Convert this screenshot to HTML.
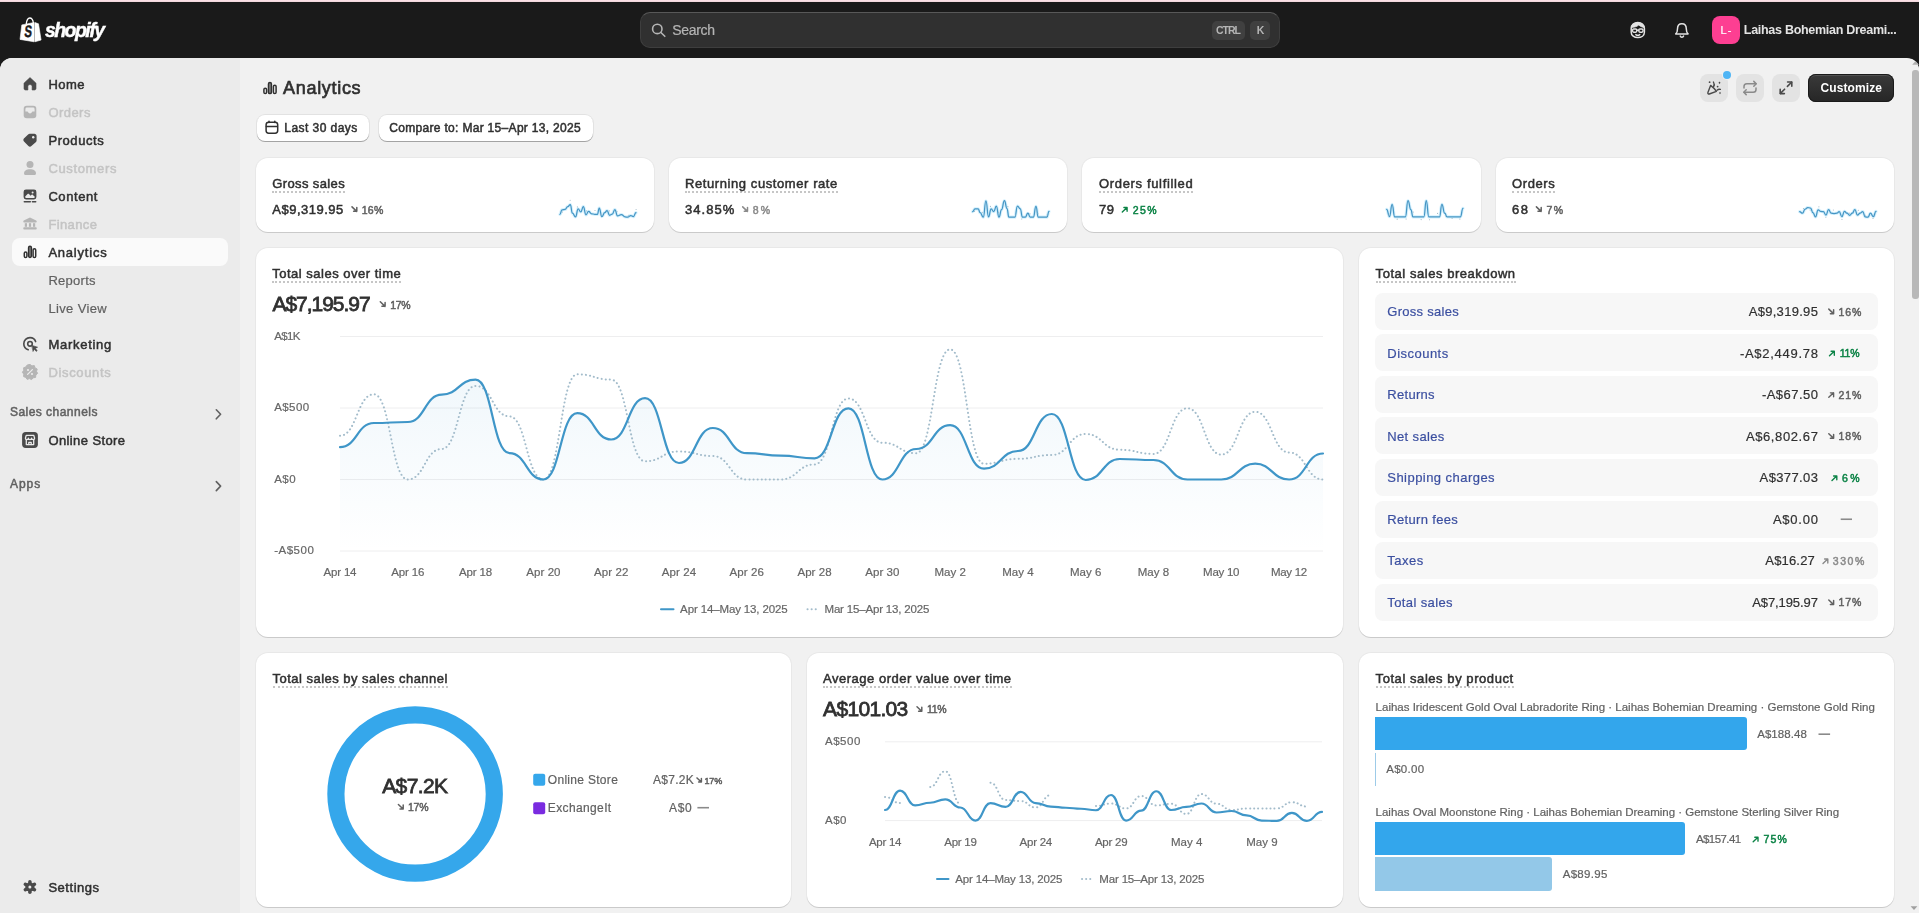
<!DOCTYPE html>
<html><head><meta charset="utf-8"><title>Analytics</title>
<style>
html,body{margin:0;padding:0}
body{width:1919px;height:913px;overflow:hidden;background:#1a1a1a;font-family:"Liberation Sans",sans-serif;position:relative}
.abs{position:absolute}
.t{position:absolute;white-space:pre;line-height:20px;font-family:"Liberation Sans",sans-serif}
.card{position:absolute;background:#fff;border-radius:12px;box-shadow:0 1px 0 0 rgba(0,0,0,.13),0 0 0 1px rgba(0,0,0,.035)}
.btn{position:absolute;background:#fff;border-radius:8px;box-shadow:0 1px 0 0 rgba(0,0,0,.28),0 0 0 1px rgba(0,0,0,.06)}
.ib{position:absolute;background:#e3e3e3;border-radius:8px;width:28px;height:28px;top:74px}
.row{position:absolute;left:1375px;width:502.5px;height:37px;background:#f7f7f7;border-radius:8px}
</style></head><body>
<!-- top bar -->
<div class="abs" style="left:0;top:0;width:1919px;height:2px;background:linear-gradient(#fee3e9,#efd6db)"></div>
<div class="abs" style="left:0;top:2px;width:1919px;height:56px;background:#1a1a1a"></div>
<div class="abs" style="left:640px;top:12px;width:638px;height:34px;border-radius:10px;background:#303030;border:1px solid #3e3e3e;border-top-color:#585858"></div>
<div class="abs" style="left:1211.5px;top:20.5px;width:33.5px;height:19.5px;border-radius:5px;background:#404040"></div>
<div class="abs" style="left:1250px;top:20.5px;width:19.5px;height:19.5px;border-radius:5px;background:#404040"></div>
<div class="abs" style="left:1712px;top:16px;width:28px;height:28px;border-radius:8px;background:#fd3f92"></div>
<!-- frame -->
<div class="abs" style="left:0;top:58px;width:1919px;height:855px;background:#f1f1f1;border-radius:12px 12px 0 0;overflow:hidden">
  <div class="abs" style="left:0;top:0;width:240px;height:855px;background:#ebebeb"></div>
  <div class="abs" style="left:1911px;top:0;width:8px;height:855px;background:#f1f1f1"></div>
</div>
<div class="abs" style="left:1912px;top:70px;width:6.5px;height:229px;border-radius:3px;background:#b8b8b8"></div>
<svg class="abs" style="left:1909px;top:58px" width="10" height="855" viewBox="0 0 10 855"><path d="M3.2,6.8L6.6,2.9L10,6.8Z" fill="#b0b0b0"/><path d="M1.6,848.2L5,852L8.4,848.2Z" fill="#a0a0a0"/></svg>
<div class="abs" style="left:12px;top:238px;width:216px;height:28px;border-radius:8px;background:#fafafa"></div>
<!-- header buttons -->
<div class="btn" style="left:256.5px;top:115px;width:112.5px;height:26px"></div>
<div class="btn" style="left:378.5px;top:115px;width:214px;height:26px"></div>
<div class="ib" style="left:1700px"></div><div class="ib" style="left:1736px"></div><div class="ib" style="left:1772px"></div>
<div class="abs" style="left:1723px;top:71px;width:8px;height:8px;border-radius:50%;background:#4fb5f5;box-shadow:0 0 0 1px #f1f1f1"></div>
<div class="abs" style="left:1808px;top:74px;width:86px;height:28px;border-radius:8px;background:linear-gradient(#3a3a3a,#262626);box-shadow:inset 0 0 0 1px #1a1a1a,inset 0 2px 0 rgba(255,255,255,.12)"></div>
<!-- cards -->
<div class="card" style="left:256px;top:158px;width:398.2px;height:74px"></div>
<div class="card" style="left:669px;top:158px;width:398.2px;height:74px"></div>
<div class="card" style="left:1082.4px;top:158px;width:398.4px;height:74px"></div>
<div class="card" style="left:1495.8px;top:158px;width:398.2px;height:74px"></div>
<div class="card" style="left:256px;top:248px;width:1086.7px;height:389px"></div>
<div class="card" style="left:1358.7px;top:248px;width:535.3px;height:389px"></div>
<div class="card" style="left:256px;top:653px;width:535.3px;height:253.5px"></div>
<div class="card" style="left:807.3px;top:653px;width:535.3px;height:253.5px"></div>
<div class="card" style="left:1358.7px;top:653px;width:535.3px;height:253.5px"></div>
<!-- breakdown rows -->
<div class="row" style="top:292.80px"></div><div class="row" style="top:334.35px"></div><div class="row" style="top:375.90px"></div><div class="row" style="top:417.45px"></div><div class="row" style="top:459.00px"></div><div class="row" style="top:500.55px"></div><div class="row" style="top:542.10px"></div><div class="row" style="top:583.65px"></div>
<!-- product bars -->
<div class="abs" style="left:1375px;top:717px;width:372px;height:33.3px;background:#33a6ec;border-radius:0 3px 3px 0"></div>
<div class="abs" style="left:1375px;top:752.6px;width:1.2px;height:33.3px;background:#9dcbe8"></div>
<div class="abs" style="left:1375px;top:822.2px;width:310.3px;height:33px;background:#33a6ec;border-radius:0 3px 3px 0"></div>
<div class="abs" style="left:1375px;top:857.4px;width:177.1px;height:33.3px;background:#93c8e8;border-radius:0 3px 3px 0"></div>
<!-- donut -->
<svg class="abs" style="left:0;top:0" width="1919" height="913" viewBox="0 0 1919 913">
<circle cx="415.1" cy="794" r="79.2" fill="none" stroke="#35a7eb" stroke-width="17.2"/>
<rect x="533.2" y="773.8" width="12" height="12" rx="2" fill="#35a7eb"/>
<rect x="533.2" y="802.2" width="12" height="12" rx="2" fill="#7a2be0"/>
</svg>
<svg class="abs" style="left:0;top:0" width="1919" height="913" viewBox="0 0 1919 913">
<defs><linearGradient id="ag" x1="0" y1="380" x2="0" y2="551" gradientUnits="userSpaceOnUse"><stop offset="0" stop-color="#3f9ad0" stop-opacity=".075"/><stop offset="1" stop-color="#3f9ad0" stop-opacity="0"/></linearGradient></defs>
<line x1="340" x2="1323" y1="336.5" y2="336.5" stroke="#eeeeef" stroke-width="1"/><line x1="340" x2="1323" y1="408" y2="408" stroke="#eeeeef" stroke-width="1"/><line x1="340" x2="1323" y1="479.5" y2="479.5" stroke="#eeeeef" stroke-width="1"/><line x1="340" x2="1323" y1="551" y2="551" stroke="#eeeeef" stroke-width="1"/>
<path d="M340.00,447.20C356.95,447.20,356.95,423.00,373.90,423.00C390.84,423.00,390.84,422.00,407.79,422.00C424.74,422.00,424.74,394.70,441.69,394.70C458.64,394.70,458.64,379.60,475.59,379.60C492.53,379.60,492.53,453.20,509.48,453.20C526.43,453.20,526.43,479.50,543.38,479.50C560.33,479.50,560.33,413.20,577.28,413.20C594.22,413.20,594.22,439.50,611.17,439.50C628.12,439.50,628.12,398.20,645.07,398.20C662.02,398.20,662.02,463.00,678.97,463.00C695.91,463.00,695.91,428.00,712.86,428.00C729.81,428.00,729.81,453.20,746.76,453.20C763.71,453.20,763.71,455.60,780.66,455.60C797.60,455.60,797.60,458.40,814.55,458.40C831.50,458.40,831.50,408.30,848.45,408.30C865.40,408.30,865.40,479.50,882.34,479.50C899.29,479.50,899.29,449.00,916.24,449.00C933.19,449.00,933.19,425.20,950.14,425.20C967.09,425.20,967.09,468.60,984.03,468.60C1000.98,468.60,1000.98,451.00,1017.93,451.00C1034.88,451.00,1034.88,414.00,1051.83,414.00C1068.78,414.00,1068.78,480.00,1085.72,480.00C1102.67,480.00,1102.67,459.00,1119.62,459.00C1136.57,459.00,1136.57,460.00,1153.52,460.00C1170.47,460.00,1170.47,479.50,1187.41,479.50C1204.36,479.50,1204.36,479.50,1221.31,479.50C1238.26,479.50,1238.26,463.70,1255.21,463.70C1272.16,463.70,1272.16,479.50,1289.10,479.50C1306.05,479.50,1306.05,453.50,1323.00,453.50L1323.00,551L340.00,551Z" fill="url(#ag)"/>
<path d="M340.00,435.70C356.95,435.70,356.95,394.30,373.90,394.30C390.84,394.30,390.84,479.50,407.79,479.50C424.74,479.50,424.74,449.00,441.69,449.00C458.64,449.00,458.64,385.90,475.59,385.90C492.53,385.90,492.53,416.40,509.48,416.40C526.43,416.40,526.43,479.50,543.38,479.50C560.33,479.50,560.33,374.30,577.28,374.30C594.22,374.30,594.22,379.60,611.17,379.60C628.12,379.60,628.12,461.30,645.07,461.30C662.02,461.30,662.02,451.40,678.97,451.40C695.91,451.40,695.91,456.00,712.86,456.00C729.81,456.00,729.81,479.50,746.76,479.50C763.71,479.50,763.71,479.50,780.66,479.50C797.60,479.50,797.60,464.40,814.55,464.40C831.50,464.40,831.50,398.50,848.45,398.50C865.40,398.50,865.40,442.70,882.34,442.70C899.29,442.70,899.29,453.20,916.24,453.20C933.19,453.20,933.19,349.40,950.14,349.40C967.09,349.40,967.09,463.70,984.03,463.70C1000.98,463.70,1000.98,458.80,1017.93,458.80C1034.88,458.80,1034.88,455.00,1051.83,455.00C1068.78,455.00,1068.78,434.00,1085.72,434.00C1102.67,434.00,1102.67,449.70,1119.62,449.70C1136.57,449.70,1136.57,453.90,1153.52,453.90C1170.47,453.90,1170.47,408.30,1187.41,408.30C1204.36,408.30,1204.36,454.60,1221.31,454.60C1238.26,454.60,1238.26,411.80,1255.21,411.80C1272.16,411.80,1272.16,452.50,1289.10,452.50C1306.05,452.50,1306.05,479.50,1323.00,479.50" fill="none" stroke="#a3bccb" stroke-width="2" stroke-dasharray="0.1 4" stroke-linecap="round"/>
<path d="M340.00,447.20C356.95,447.20,356.95,423.00,373.90,423.00C390.84,423.00,390.84,422.00,407.79,422.00C424.74,422.00,424.74,394.70,441.69,394.70C458.64,394.70,458.64,379.60,475.59,379.60C492.53,379.60,492.53,453.20,509.48,453.20C526.43,453.20,526.43,479.50,543.38,479.50C560.33,479.50,560.33,413.20,577.28,413.20C594.22,413.20,594.22,439.50,611.17,439.50C628.12,439.50,628.12,398.20,645.07,398.20C662.02,398.20,662.02,463.00,678.97,463.00C695.91,463.00,695.91,428.00,712.86,428.00C729.81,428.00,729.81,453.20,746.76,453.20C763.71,453.20,763.71,455.60,780.66,455.60C797.60,455.60,797.60,458.40,814.55,458.40C831.50,458.40,831.50,408.30,848.45,408.30C865.40,408.30,865.40,479.50,882.34,479.50C899.29,479.50,899.29,449.00,916.24,449.00C933.19,449.00,933.19,425.20,950.14,425.20C967.09,425.20,967.09,468.60,984.03,468.60C1000.98,468.60,1000.98,451.00,1017.93,451.00C1034.88,451.00,1034.88,414.00,1051.83,414.00C1068.78,414.00,1068.78,480.00,1085.72,480.00C1102.67,480.00,1102.67,459.00,1119.62,459.00C1136.57,459.00,1136.57,460.00,1153.52,460.00C1170.47,460.00,1170.47,479.50,1187.41,479.50C1204.36,479.50,1204.36,479.50,1221.31,479.50C1238.26,479.50,1238.26,463.70,1255.21,463.70C1272.16,463.70,1272.16,479.50,1289.10,479.50C1306.05,479.50,1306.05,453.50,1323.00,453.50" fill="none" stroke="#3f96c8" stroke-width="2.2" stroke-linecap="round" stroke-linejoin="round"/>
<line x1="661" x2="673.5" y1="609.3" y2="609.3" stroke="#3f96c8" stroke-width="2" stroke-linecap="round"/>
<line x1="807.5" x2="817" y1="609.3" y2="609.3" stroke="#a3bccb" stroke-width="2" stroke-dasharray="0.1 4" stroke-linecap="round"/>
</svg>
<svg class="abs" style="left:0;top:0" width="1919" height="913" viewBox="0 0 1919 913">
<line x1="885" x2="1322" y1="741.8" y2="741.8" stroke="#eeeeef" stroke-width="1"/><line x1="885" x2="1322" y1="820.6" y2="820.6" stroke="#eeeeef" stroke-width="1"/>
<path d="M885.00,796.90C892.53,796.90,892.53,803.10,900.07,803.10M930.21,786.90C937.74,786.90,937.74,771.25,945.28,771.25C952.81,771.25,952.81,803.75,960.34,803.75M990.48,782.75C998.02,782.75,998.02,800.00,1005.55,800.00C1013.09,800.00,1013.09,801.00,1020.62,801.00C1028.16,801.00,1028.16,807.50,1035.69,807.50C1043.22,807.50,1043.22,795.00,1050.76,795.00M1095.97,806.00C1103.50,806.00,1103.50,803.50,1111.03,803.50C1118.57,803.50,1118.57,808.50,1126.10,808.50C1133.64,808.50,1133.64,796.00,1141.17,796.00C1148.71,796.00,1148.71,805.40,1156.24,805.40C1163.78,805.40,1163.78,803.75,1171.31,803.75C1178.84,803.75,1178.84,814.00,1186.38,814.00C1193.91,814.00,1193.91,794.10,1201.45,794.10C1208.98,794.10,1208.98,803.75,1216.52,803.75C1224.05,803.75,1224.05,810.00,1231.59,810.00C1239.12,810.00,1239.12,808.50,1246.66,808.50C1254.19,808.50,1254.19,808.50,1261.72,808.50C1269.26,808.50,1269.26,808.50,1276.79,808.50C1284.33,808.50,1284.33,802.25,1291.86,802.25C1299.40,802.25,1299.40,806.50,1306.93,806.50" fill="none" stroke="#a3bccb" stroke-width="2" stroke-dasharray="0.1 4" stroke-linecap="round"/>
<path d="M885.00,810.00C892.53,810.00,892.53,790.60,900.07,790.60C907.60,790.60,907.60,805.40,915.14,805.40C922.67,805.40,922.67,802.75,930.21,802.75C937.74,802.75,937.74,799.40,945.28,799.40C952.81,799.40,952.81,807.50,960.34,807.50C967.88,807.50,967.88,820.60,975.41,820.60C982.95,820.60,982.95,803.10,990.48,803.10C998.02,803.10,998.02,806.90,1005.55,806.90C1013.09,806.90,1013.09,791.90,1020.62,791.90C1028.16,791.90,1028.16,803.10,1035.69,803.10C1043.22,803.10,1043.22,806.60,1050.76,806.60C1058.29,806.60,1058.29,807.75,1065.83,807.75C1073.36,807.75,1073.36,808.75,1080.90,808.75C1088.43,808.75,1088.43,810.25,1095.97,810.25C1103.50,810.25,1103.50,795.00,1111.03,795.00C1118.57,795.00,1118.57,820.60,1126.10,820.60C1133.64,820.60,1133.64,810.60,1141.17,810.60C1148.71,810.60,1148.71,791.25,1156.24,791.25C1163.78,791.25,1163.78,810.00,1171.31,810.00C1178.84,810.00,1178.84,806.90,1186.38,806.90C1193.91,806.90,1193.91,803.50,1201.45,803.50C1208.98,803.50,1208.98,812.50,1216.52,812.50C1224.05,812.50,1224.05,811.00,1231.59,811.00C1239.12,811.00,1239.12,815.40,1246.66,815.40C1254.19,815.40,1254.19,820.60,1261.72,820.60C1269.26,820.60,1269.26,820.90,1276.79,820.90C1284.33,820.90,1284.33,812.90,1291.86,812.90C1299.40,812.90,1299.40,820.90,1306.93,820.90C1314.47,820.90,1314.47,811.90,1322.00,811.90" fill="none" stroke="#3f96c8" stroke-width="2.2" stroke-linecap="round" stroke-linejoin="round"/>
<line x1="937" x2="948.5" y1="879" y2="879" stroke="#3f96c8" stroke-width="2" stroke-linecap="round"/>
<line x1="1082" x2="1092" y1="879" y2="879" stroke="#a3bccb" stroke-width="2" stroke-dasharray="0.1 4" stroke-linecap="round"/>
</svg>
<svg class="abs" style="left:0;top:0" width="1919" height="913" viewBox="0 0 1919 913"><path d="M559.90,214.28C560.94,214.28,560.94,209.85,561.99,209.85C563.55,209.85,563.55,209.33,565.11,209.33C566.41,209.33,566.41,206.72,567.72,206.72C569.02,206.72,569.02,204.64,570.32,204.64C571.37,204.64,571.37,213.24,572.41,213.24C573.97,213.24,573.97,216.89,575.53,216.89C576.84,216.89,576.84,208.81,578.14,208.81C579.44,208.81,579.44,211.94,580.75,211.94C582.05,211.94,582.05,206.72,583.35,206.72C584.65,206.72,584.65,214.80,585.96,214.80C587.26,214.80,587.26,211.41,588.56,211.41C590.13,211.41,590.13,213.76,591.69,213.76C593.25,213.76,593.25,214.28,594.82,214.28C596.12,214.28,596.12,214.28,597.42,214.28C598.33,214.28,598.33,208.03,599.24,208.03C600.55,208.03,600.55,216.63,601.85,216.63C603.28,216.63,603.28,212.72,604.72,212.72C605.89,212.72,605.89,210.63,607.06,210.63C608.36,210.63,608.36,215.32,609.67,215.32C610.97,215.32,610.97,214.02,612.27,214.02C613.57,214.02,613.57,209.59,614.88,209.59C616.18,209.59,616.18,215.84,617.48,215.84C619.44,215.84,619.44,214.54,621.39,214.54C623.22,214.54,623.22,216.89,625.04,216.89C626.34,216.89,626.34,217.15,627.64,217.15C629.21,217.15,629.21,215.58,630.77,215.58C632.07,215.58,632.07,216.63,633.38,216.63C634.68,216.63,634.68,212.72,635.98,212.72" fill="none" stroke="#aee3fc" stroke-width="3.2" stroke-linejoin="round" stroke-linecap="round" opacity=".55"/><path d="M559.90,214.28C560.94,214.28,560.94,209.85,561.99,209.85C563.55,209.85,563.55,209.33,565.11,209.33C566.41,209.33,566.41,206.72,567.72,206.72C569.02,206.72,569.02,204.64,570.32,204.64C571.37,204.64,571.37,213.24,572.41,213.24C573.97,213.24,573.97,216.89,575.53,216.89C576.84,216.89,576.84,208.81,578.14,208.81C579.44,208.81,579.44,211.94,580.75,211.94C582.05,211.94,582.05,206.72,583.35,206.72C584.65,206.72,584.65,214.80,585.96,214.80C587.26,214.80,587.26,211.41,588.56,211.41C590.13,211.41,590.13,213.76,591.69,213.76C593.25,213.76,593.25,214.28,594.82,214.28C596.12,214.28,596.12,214.28,597.42,214.28C598.33,214.28,598.33,208.03,599.24,208.03C600.55,208.03,600.55,216.63,601.85,216.63C603.28,216.63,603.28,212.72,604.72,212.72C605.89,212.72,605.89,210.63,607.06,210.63C608.36,210.63,608.36,215.32,609.67,215.32C610.97,215.32,610.97,214.02,612.27,214.02C613.57,214.02,613.57,209.59,614.88,209.59C616.18,209.59,616.18,215.84,617.48,215.84C619.44,215.84,619.44,214.54,621.39,214.54C623.22,214.54,623.22,216.89,625.04,216.89C626.34,216.89,626.34,217.15,627.64,217.15C629.21,217.15,629.21,215.58,630.77,215.58C632.07,215.58,632.07,216.63,633.38,216.63C634.68,216.63,634.68,212.72,635.98,212.72" fill="none" stroke="#4595c4" stroke-width="1.25" stroke-linejoin="round" stroke-linecap="round"/><circle cx="562.40" cy="212.06" r="0.55" fill="#9fb8c6"/><circle cx="570.18" cy="200.19" r="0.55" fill="#9fb8c6"/><circle cx="577.37" cy="206.91" r="0.55" fill="#9fb8c6"/><circle cx="586.53" cy="210.87" r="0.55" fill="#9fb8c6"/><circle cx="595.01" cy="210.45" r="0.55" fill="#9fb8c6"/><circle cx="601.02" cy="214.11" r="0.55" fill="#9fb8c6"/><circle cx="609.30" cy="210.87" r="0.55" fill="#9fb8c6"/><circle cx="616.96" cy="211.51" r="0.55" fill="#9fb8c6"/><circle cx="628.35" cy="215.31" r="0.55" fill="#9fb8c6"/><circle cx="636.09" cy="209.45" r="0.55" fill="#9fb8c6"/><path d="M972.64,211.68C973.81,211.68,973.81,208.81,974.99,208.81C976.55,208.81,976.55,208.81,978.11,208.81C979.15,208.81,979.15,212.72,980.20,212.72C981.76,212.72,981.76,217.15,983.32,217.15C984.63,217.15,984.63,200.99,985.93,200.99C987.23,200.99,987.23,216.89,988.53,216.89C989.84,216.89,989.84,208.81,991.14,208.81C992.44,208.81,992.44,211.68,993.75,211.68C995.05,211.68,995.05,206.20,996.35,206.20C997.65,206.20,997.65,217.15,998.96,217.15C1000.26,217.15,1000.26,209.59,1001.56,209.59C1002.99,209.59,1002.99,200.73,1004.43,200.73C1005.73,200.73,1005.73,208.55,1007.03,208.55C1007.95,208.55,1007.95,217.15,1008.86,217.15C1010.42,217.15,1010.42,217.15,1011.98,217.15C1013.42,217.15,1013.42,217.15,1014.85,217.15C1016.15,217.15,1016.15,206.20,1017.46,206.20C1018.89,206.20,1018.89,208.81,1020.32,208.81C1021.36,208.81,1021.36,217.15,1022.41,217.15C1023.84,217.15,1023.84,217.15,1025.27,217.15C1026.57,217.15,1026.57,213.24,1027.88,213.24C1029.05,213.24,1029.05,217.15,1030.22,217.15C1031.79,217.15,1031.79,217.15,1033.35,217.15C1034.65,217.15,1034.65,206.46,1035.95,206.46C1037.13,206.46,1037.13,217.15,1038.30,217.15C1039.73,217.15,1039.73,217.15,1041.17,217.15C1042.73,217.15,1042.73,217.15,1044.29,217.15C1045.60,217.15,1045.60,217.15,1046.90,217.15C1047.94,217.15,1047.94,211.41,1048.98,211.41" fill="none" stroke="#aee3fc" stroke-width="3.2" stroke-linejoin="round" stroke-linecap="round" opacity=".55"/><path d="M972.64,211.68C973.81,211.68,973.81,208.81,974.99,208.81C976.55,208.81,976.55,208.81,978.11,208.81C979.15,208.81,979.15,212.72,980.20,212.72C981.76,212.72,981.76,217.15,983.32,217.15C984.63,217.15,984.63,200.99,985.93,200.99C987.23,200.99,987.23,216.89,988.53,216.89C989.84,216.89,989.84,208.81,991.14,208.81C992.44,208.81,992.44,211.68,993.75,211.68C995.05,211.68,995.05,206.20,996.35,206.20C997.65,206.20,997.65,217.15,998.96,217.15C1000.26,217.15,1000.26,209.59,1001.56,209.59C1002.99,209.59,1002.99,200.73,1004.43,200.73C1005.73,200.73,1005.73,208.55,1007.03,208.55C1007.95,208.55,1007.95,217.15,1008.86,217.15C1010.42,217.15,1010.42,217.15,1011.98,217.15C1013.42,217.15,1013.42,217.15,1014.85,217.15C1016.15,217.15,1016.15,206.20,1017.46,206.20C1018.89,206.20,1018.89,208.81,1020.32,208.81C1021.36,208.81,1021.36,217.15,1022.41,217.15C1023.84,217.15,1023.84,217.15,1025.27,217.15C1026.57,217.15,1026.57,213.24,1027.88,213.24C1029.05,213.24,1029.05,217.15,1030.22,217.15C1031.79,217.15,1031.79,217.15,1033.35,217.15C1034.65,217.15,1034.65,206.46,1035.95,206.46C1037.13,206.46,1037.13,217.15,1038.30,217.15C1039.73,217.15,1039.73,217.15,1041.17,217.15C1042.73,217.15,1042.73,217.15,1044.29,217.15C1045.60,217.15,1045.60,217.15,1046.90,217.15C1047.94,217.15,1047.94,211.41,1048.98,211.41" fill="none" stroke="#4595c4" stroke-width="1.25" stroke-linejoin="round" stroke-linecap="round"/><circle cx="974.58" cy="211.56" r="0.55" fill="#9fb8c6"/><circle cx="982.37" cy="212.23" r="0.55" fill="#9fb8c6"/><circle cx="990.43" cy="206.42" r="0.55" fill="#9fb8c6"/><circle cx="998.57" cy="212.42" r="0.55" fill="#9fb8c6"/><circle cx="1007.88" cy="206.66" r="0.55" fill="#9fb8c6"/><circle cx="1015.62" cy="215.03" r="0.55" fill="#9fb8c6"/><circle cx="1021.71" cy="218.94" r="0.55" fill="#9fb8c6"/><circle cx="1030.01" cy="213.73" r="0.55" fill="#9fb8c6"/><circle cx="1037.96" cy="213.69" r="0.55" fill="#9fb8c6"/><circle cx="1047.06" cy="215.06" r="0.55" fill="#9fb8c6"/><path d="M1386.64,209.33C1388.07,209.33,1388.07,216.63,1389.51,216.63C1390.81,216.63,1390.81,204.38,1392.11,204.38C1393.41,204.38,1393.41,216.89,1394.72,216.89C1396.02,216.89,1396.02,216.89,1397.32,216.89C1398.63,216.89,1398.63,216.89,1399.93,216.89C1401.23,216.89,1401.23,216.89,1402.53,216.89C1403.97,216.89,1403.97,216.89,1405.40,216.89C1406.70,216.89,1406.70,200.73,1408.01,200.73C1409.44,200.73,1409.44,209.59,1410.87,209.59C1411.91,209.59,1411.91,216.89,1412.96,216.89C1414.26,216.89,1414.26,216.89,1415.56,216.89C1416.99,216.89,1416.99,216.89,1418.43,216.89C1419.73,216.89,1419.73,216.89,1421.03,216.89C1422.47,216.89,1422.47,216.89,1423.90,216.89C1425.07,216.89,1425.07,200.73,1426.24,200.73C1427.55,200.73,1427.55,216.89,1428.85,216.89C1430.15,216.89,1430.15,216.89,1431.46,216.89C1432.89,216.89,1432.89,216.89,1434.32,216.89C1435.62,216.89,1435.62,216.89,1436.93,216.89C1438.23,216.89,1438.23,216.89,1439.53,216.89C1440.71,216.89,1440.71,204.38,1441.88,204.38C1443.31,204.38,1443.31,213.24,1444.74,213.24C1445.92,213.24,1445.92,216.89,1447.09,216.89C1448.52,216.89,1448.52,216.89,1449.95,216.89C1451.26,216.89,1451.26,216.89,1452.56,216.89C1453.86,216.89,1453.86,216.89,1455.17,216.89C1456.47,216.89,1456.47,216.89,1457.77,216.89C1459.07,216.89,1459.07,216.89,1460.38,216.89C1461.68,216.89,1461.68,208.29,1462.98,208.29" fill="none" stroke="#aee3fc" stroke-width="3.2" stroke-linejoin="round" stroke-linecap="round" opacity=".55"/><path d="M1386.64,209.33C1388.07,209.33,1388.07,216.63,1389.51,216.63C1390.81,216.63,1390.81,204.38,1392.11,204.38C1393.41,204.38,1393.41,216.89,1394.72,216.89C1396.02,216.89,1396.02,216.89,1397.32,216.89C1398.63,216.89,1398.63,216.89,1399.93,216.89C1401.23,216.89,1401.23,216.89,1402.53,216.89C1403.97,216.89,1403.97,216.89,1405.40,216.89C1406.70,216.89,1406.70,200.73,1408.01,200.73C1409.44,200.73,1409.44,209.59,1410.87,209.59C1411.91,209.59,1411.91,216.89,1412.96,216.89C1414.26,216.89,1414.26,216.89,1415.56,216.89C1416.99,216.89,1416.99,216.89,1418.43,216.89C1419.73,216.89,1419.73,216.89,1421.03,216.89C1422.47,216.89,1422.47,216.89,1423.90,216.89C1425.07,216.89,1425.07,200.73,1426.24,200.73C1427.55,200.73,1427.55,216.89,1428.85,216.89C1430.15,216.89,1430.15,216.89,1431.46,216.89C1432.89,216.89,1432.89,216.89,1434.32,216.89C1435.62,216.89,1435.62,216.89,1436.93,216.89C1438.23,216.89,1438.23,216.89,1439.53,216.89C1440.71,216.89,1440.71,204.38,1441.88,204.38C1443.31,204.38,1443.31,213.24,1444.74,213.24C1445.92,213.24,1445.92,216.89,1447.09,216.89C1448.52,216.89,1448.52,216.89,1449.95,216.89C1451.26,216.89,1451.26,216.89,1452.56,216.89C1453.86,216.89,1453.86,216.89,1455.17,216.89C1456.47,216.89,1456.47,216.89,1457.77,216.89C1459.07,216.89,1459.07,216.89,1460.38,216.89C1461.68,216.89,1461.68,208.29,1462.98,208.29" fill="none" stroke="#4595c4" stroke-width="1.25" stroke-linejoin="round" stroke-linecap="round"/><circle cx="1388.71" cy="215.12" r="0.55" fill="#9fb8c6"/><circle cx="1397.20" cy="219.13" r="0.55" fill="#9fb8c6"/><circle cx="1406.13" cy="219.04" r="0.55" fill="#9fb8c6"/><circle cx="1413.16" cy="212.10" r="0.55" fill="#9fb8c6"/><circle cx="1421.14" cy="219.60" r="0.55" fill="#9fb8c6"/><circle cx="1429.52" cy="219.74" r="0.55" fill="#9fb8c6"/><circle cx="1437.53" cy="213.40" r="0.55" fill="#9fb8c6"/><circle cx="1445.54" cy="215.77" r="0.55" fill="#9fb8c6"/><circle cx="1452.11" cy="218.55" r="0.55" fill="#9fb8c6"/><circle cx="1459.88" cy="219.08" r="0.55" fill="#9fb8c6"/><path d="M1799.64,211.68C1801.07,211.68,1801.07,213.24,1802.51,213.24C1803.81,213.24,1803.81,209.07,1805.11,209.07C1806.41,209.07,1806.41,207.51,1807.72,207.51C1809.15,207.51,1809.15,208.03,1810.58,208.03C1811.76,208.03,1811.76,212.72,1812.93,212.72C1814.23,212.72,1814.23,216.89,1815.53,216.89C1816.84,216.89,1816.84,209.85,1818.14,209.85C1819.44,209.85,1819.44,211.41,1820.75,211.41C1822.05,211.41,1822.05,211.68,1823.35,211.68C1824.65,211.68,1824.65,215.06,1825.96,215.06C1827.26,215.06,1827.26,209.59,1828.56,209.59C1829.86,209.59,1829.86,213.24,1831.17,213.24C1832.60,213.24,1832.60,213.50,1834.03,213.50C1835.47,213.50,1835.47,213.24,1836.90,213.24C1838.07,213.24,1838.07,211.68,1839.24,211.68C1840.55,211.68,1840.55,216.63,1841.85,216.63C1843.15,216.63,1843.15,211.41,1844.46,211.41C1845.76,211.41,1845.76,213.24,1847.06,213.24C1848.36,213.24,1848.36,215.32,1849.67,215.32C1850.97,215.32,1850.97,213.24,1852.27,213.24C1853.57,213.24,1853.57,209.59,1854.88,209.59C1856.18,209.59,1856.18,215.06,1857.48,215.06C1858.79,215.06,1858.79,213.24,1860.09,213.24C1861.39,213.24,1861.39,211.68,1862.69,211.68C1864.00,211.68,1864.00,216.89,1865.30,216.89C1866.60,216.89,1866.60,217.15,1867.91,217.15C1869.21,217.15,1869.21,213.24,1870.51,213.24C1871.94,213.24,1871.94,216.63,1873.38,216.63C1874.68,216.63,1874.68,211.41,1875.98,211.41" fill="none" stroke="#aee3fc" stroke-width="3.2" stroke-linejoin="round" stroke-linecap="round" opacity=".55"/><path d="M1799.64,211.68C1801.07,211.68,1801.07,213.24,1802.51,213.24C1803.81,213.24,1803.81,209.07,1805.11,209.07C1806.41,209.07,1806.41,207.51,1807.72,207.51C1809.15,207.51,1809.15,208.03,1810.58,208.03C1811.76,208.03,1811.76,212.72,1812.93,212.72C1814.23,212.72,1814.23,216.89,1815.53,216.89C1816.84,216.89,1816.84,209.85,1818.14,209.85C1819.44,209.85,1819.44,211.41,1820.75,211.41C1822.05,211.41,1822.05,211.68,1823.35,211.68C1824.65,211.68,1824.65,215.06,1825.96,215.06C1827.26,215.06,1827.26,209.59,1828.56,209.59C1829.86,209.59,1829.86,213.24,1831.17,213.24C1832.60,213.24,1832.60,213.50,1834.03,213.50C1835.47,213.50,1835.47,213.24,1836.90,213.24C1838.07,213.24,1838.07,211.68,1839.24,211.68C1840.55,211.68,1840.55,216.63,1841.85,216.63C1843.15,216.63,1843.15,211.41,1844.46,211.41C1845.76,211.41,1845.76,213.24,1847.06,213.24C1848.36,213.24,1848.36,215.32,1849.67,215.32C1850.97,215.32,1850.97,213.24,1852.27,213.24C1853.57,213.24,1853.57,209.59,1854.88,209.59C1856.18,209.59,1856.18,215.06,1857.48,215.06C1858.79,215.06,1858.79,213.24,1860.09,213.24C1861.39,213.24,1861.39,211.68,1862.69,211.68C1864.00,211.68,1864.00,216.89,1865.30,216.89C1866.60,216.89,1866.60,217.15,1867.91,217.15C1869.21,217.15,1869.21,213.24,1870.51,213.24C1871.94,213.24,1871.94,216.63,1873.38,216.63C1874.68,216.63,1874.68,211.41,1875.98,211.41" fill="none" stroke="#4595c4" stroke-width="1.25" stroke-linejoin="round" stroke-linecap="round"/><circle cx="1803.44" cy="208.58" r="0.55" fill="#9fb8c6"/><circle cx="1810.14" cy="209.98" r="0.55" fill="#9fb8c6"/><circle cx="1818.90" cy="206.84" r="0.55" fill="#9fb8c6"/><circle cx="1825.85" cy="217.30" r="0.55" fill="#9fb8c6"/><circle cx="1833.37" cy="210.03" r="0.55" fill="#9fb8c6"/><circle cx="1841.97" cy="219.52" r="0.55" fill="#9fb8c6"/><circle cx="1849.27" cy="213.17" r="0.55" fill="#9fb8c6"/><circle cx="1858.36" cy="210.19" r="0.55" fill="#9fb8c6"/><circle cx="1865.31" cy="215.18" r="0.55" fill="#9fb8c6"/><circle cx="1873.00" cy="218.53" r="0.55" fill="#9fb8c6"/></svg>
<svg class="abs" style="left:0;top:0" width="1919" height="913" viewBox="0 0 1919 913"><path d="M352.00,206.84L356.70,211.37M356.80,207.44V211.37H353.60" fill="none" stroke="#616161" stroke-width="1.5" stroke-linecap="round" stroke-linejoin="round"/><path d="M742.70,206.84L747.40,211.37M747.50,207.44V211.37H744.30" fill="none" stroke="#8a8a8a" stroke-width="1.5" stroke-linecap="round" stroke-linejoin="round"/><path d="M1122.30,211.97L1127.00,207.44M1123.90,207.44H1127.10V211.37" fill="none" stroke="#0c8346" stroke-width="1.4" stroke-linecap="round" stroke-linejoin="round"/><path d="M1536.40,206.84L1541.10,211.37M1541.20,207.44V211.37H1538.00" fill="none" stroke="#616161" stroke-width="1.5" stroke-linecap="round" stroke-linejoin="round"/><path d="M380.30,301.83L385.00,306.36M385.10,302.44V306.36H381.90" fill="none" stroke="#616161" stroke-width="1.5" stroke-linecap="round" stroke-linejoin="round"/><path d="M1828.80,309.13L1833.50,313.66M1833.60,309.74V313.66H1830.40" fill="none" stroke="#616161" stroke-width="1.5" stroke-linecap="round" stroke-linejoin="round"/><path d="M1829.50,355.81L1834.20,351.29M1831.10,351.29H1834.30V355.21" fill="none" stroke="#0c8346" stroke-width="1.4" stroke-linecap="round" stroke-linejoin="round"/><path d="M1828.80,397.37L1833.50,392.84M1830.40,392.84H1833.60V396.76" fill="none" stroke="#616161" stroke-width="1.4" stroke-linecap="round" stroke-linejoin="round"/><path d="M1828.80,433.78L1833.50,438.31M1833.60,434.38V438.31H1830.40" fill="none" stroke="#616161" stroke-width="1.5" stroke-linecap="round" stroke-linejoin="round"/><path d="M1832.00,480.46L1836.70,475.94M1833.60,475.94H1836.80V479.86" fill="none" stroke="#0c8346" stroke-width="1.4" stroke-linecap="round" stroke-linejoin="round"/><line x1="1840.7" x2="1852" y1="519.25" y2="519.25" stroke="#8a8a8a" stroke-width="1.6"/><path d="M1823.00,563.57L1827.70,559.03M1824.60,559.03H1827.80V562.97" fill="none" stroke="#8a8a8a" stroke-width="1.4" stroke-linecap="round" stroke-linejoin="round"/><path d="M1828.80,599.98L1833.50,604.51M1833.60,600.58V604.51H1830.40" fill="none" stroke="#616161" stroke-width="1.5" stroke-linecap="round" stroke-linejoin="round"/><path d="M398.40,804.43L403.10,808.97M403.20,805.03V808.97H400.00" fill="none" stroke="#616161" stroke-width="1.5" stroke-linecap="round" stroke-linejoin="round"/><path d="M697.00,777.92L701.30,782.07M701.40,778.52V782.07H698.60" fill="none" stroke="#616161" stroke-width="1.5" stroke-linecap="round" stroke-linejoin="round"/><path d="M917.00,706.73L921.70,711.26M921.80,707.33V711.26H918.60" fill="none" stroke="#616161" stroke-width="1.5" stroke-linecap="round" stroke-linejoin="round"/><path d="M1753.20,841.77L1757.90,837.24M1754.80,837.24H1758.00V841.17" fill="none" stroke="#0c8346" stroke-width="1.4" stroke-linecap="round" stroke-linejoin="round"/><line x1="697.4" x2="709" y1="807.7" y2="807.7" stroke="#8a8a8a" stroke-width="1.6"/><line x1="1818.5" x2="1830.1" y1="734.2" y2="734.2" stroke="#8a8a8a" stroke-width="1.6"/></svg>
<svg class="abs" style="left:0;top:0" width="1919" height="913" viewBox="0 0 1919 913">
<!-- shopify bag -->
<g>
<path d="M21.8,24.9 L34.1,22.5 V41.8 L20,39.4 Z" fill="#fff" stroke="#fff" stroke-width="0.6" stroke-linejoin="round"/>
<path d="M34.9,22.5 L38.5,23.8 L41.1,40 L34.9,41.8 Z" fill="#fff" stroke="#fff" stroke-width="0.6" stroke-linejoin="round"/>
<path d="M26.2,24.3 C26.6,20.6 28.2,18 29.8,18 C31.6,18 33,20.4 33.4,23" fill="none" stroke="#fff" stroke-width="1.3"/>
<text transform="translate(23.9,37.3) scale(0.68,1) skewX(-8)" font-family="Liberation Sans, sans-serif" font-size="16.6" font-weight="700" fill="#1a1a1a" stroke="#1a1a1a" stroke-width="0.5">S</text>
</g>
<!-- search icon -->
<g fill="none" stroke="#b5b5b5" stroke-width="1.6" stroke-linecap="round"><circle cx="657.3" cy="28.9" r="4.7"/><path d="M660.9,32.5L664.8,36.3"/></g>
<!-- sidekick face -->
<g fill="none" stroke="#e3e3e3" stroke-width="1.5" stroke-linecap="round" stroke-linejoin="round" transform="translate(1637.8,30)">
<path d="M-6.6,-1.5C-6.6,-5.5 -3.6,-7.6 0,-7.6C3.6,-7.6 6.6,-5.5 6.6,-1.5V2.2C6.6,5.6 3.6,7.6 0,7.6C-3.6,7.6 -6.6,5.6 -6.6,2.2Z"/>
<path d="M-6.3,-2.6C-3.5,-2.8 -1,-3.2 1,-5C2.6,-3.5 4.5,-2.8 6.3,-2.6 C6,-5.6 3.4,-7.2 0,-7.2 C-3.4,-7.2 -6,-5.6 -6.3,-2.6Z" fill="#e3e3e3" stroke-width="0.8"/>
<rect x="-5.2" y="-1" width="4.2" height="3.2" rx="1.1" stroke-width="1.4"/><rect x="1" y="-1" width="4.2" height="3.2" rx="1.1" stroke-width="1.4"/><path d="M-1,0.2H1"/>
<path d="M-2,4.6C-0.9,5.4 0.9,5.4 2,4.6" stroke-width="1.4"/>
</g>
<!-- bell -->
<g fill="none" stroke="#e3e3e3" stroke-width="1.5" stroke-linecap="round" stroke-linejoin="round" transform="translate(1681.9,30.3)">
<path d="M-6.2,3.6C-4.6,2.4 -4.4,0.6 -4.4,-1.6C-4.4,-4.6 -2.6,-6.6 0,-6.6C2.6,-6.6 4.4,-4.6 4.4,-1.6C4.4,0.6 4.6,2.4 6.2,3.6Z"/>
<path d="M-1.7,5.8C-1.2,7.2 1.2,7.2 1.7,5.8"/>
</g>
<!-- ===== sidebar icons ===== -->
<!-- home -->
<path d="M30,77.6 L24.2,82.9 C24,83.1 24,83.3 24,83.6 V88.6 C24,89.4 24.6,90 25.4,90 H27.9 V86.6 C27.9,85.4 28.8,84.6 30,84.6 C31.2,84.6 32.1,85.4 32.1,86.6 V90 H34.6 C35.4,90 36,89.4 36,88.6 V83.6 C36,83.3 36,83.1 35.8,82.9 Z" fill="#4a4a4a" stroke="#4a4a4a" stroke-width="0.6" stroke-linejoin="round"/>
<!-- orders -->
<g>
<rect x="23.7" y="105.8" width="12.6" height="12.4" rx="3" fill="#b5b5b5"/>
<path d="M25.4,111.6 V109.2 C25.4,108.2 26.1,107.5 27.1,107.5 H32.9 C33.9,107.5 34.6,108.2 34.6,109.2 V111.6 H32.6 C32.3,111.6 32.1,111.8 32,112.1 C31.7,113 30.9,113.5 30,113.5 C29.1,113.5 28.3,113 28,112.1 C27.9,111.8 27.7,111.6 27.4,111.6 Z" fill="#ebebeb"/>
</g>
<!-- products tag -->
<g transform="translate(30,140)">
<path d="M-0.2,-6.2 H4.4 C5.6,-6.2 6.6,-5.2 6.6,-4 V0.6 C6.6,1.2 6.4,1.7 6,2.1 L1.4,6.1 C0.5,6.9 -0.8,6.8 -1.6,6 L-6,1.6 C-6.8,0.8 -6.9,-0.5 -6.1,-1.4 L-1.9,-5.5 C-1.4,-6 -0.8,-6.2 -0.2,-6.2 Z" fill="#4a4a4a"/>
<circle cx="3.2" cy="-2.8" r="1.2" fill="#ebebeb"/>
</g>
<!-- customers -->
<g fill="#b5b5b5"><circle cx="30" cy="164.6" r="3.5"/><path d="M24,173.4C24,170.6 26.6,169.2 30,169.2C33.4,169.2 36,170.6 36,173.4C36,174.3 35.4,174.9 34.5,174.9H25.5C24.6,174.9 24,174.3 24,173.4Z"/></g>
<!-- content -->
<g>
<rect x="23.6" y="189.6" width="12.8" height="9.8" rx="2.4" fill="#4a4a4a"/>
<path d="M25.2,196.6 L27.6,194 C28,193.6 28.6,193.6 29,194 L30.6,195.7 L31.6,194.8 C32,194.5 32.5,194.5 32.9,194.9 L34.8,196.8 V197 C34.8,197.5 34.4,197.9 33.9,197.9 H26.1 C25.6,197.9 25.2,197.5 25.2,197 Z" fill="#ebebeb"/>
<circle cx="32.6" cy="192.4" r="1" fill="#ebebeb"/>
<path d="M24.3,201.8H30.3M32.4,201.8H35.7" stroke="#4a4a4a" stroke-width="1.5" stroke-linecap="round"/>
</g>
<!-- finance -->
<g fill="#b5b5b5">
<path d="M30,217.4 L36.2,220.4 C36.6,220.6 36.7,221 36.7,221.4 V221.8 C36.7,222.2 36.4,222.5 36,222.5 H24 C23.6,222.5 23.3,222.2 23.3,221.8 V221.4 C23.3,221 23.4,220.6 23.8,220.4 Z"/>
<rect x="24.8" y="223.2" width="2.2" height="3.6"/><rect x="28.9" y="223.2" width="2.2" height="3.6"/><rect x="33" y="223.2" width="2.2" height="3.6"/>
<rect x="23.3" y="227.3" width="13.4" height="2.3" rx="0.8"/>
</g>
<!-- analytics nav -->
<g fill="none" stroke="#303030" stroke-width="1.5">
<rect x="24.3" y="252" width="2.6" height="5.5" rx="1.3"/><rect x="28.6" y="246.3" width="2.8" height="11.2" rx="1.4" fill="#8a8a8a"/><rect x="33.1" y="248.8" width="2.6" height="8.7" rx="1.3"/>
</g>
<!-- marketing -->
<g fill="none" stroke="#4a4a4a" stroke-width="1.6" stroke-linecap="round" stroke-linejoin="round">
<path d="M35.6,341.6 C34.8,339 32.6,337.6 30,337.6 C26.5,337.6 23.8,340.4 23.8,343.8 C23.8,346.6 25.6,349 28.2,349.8"/>
<circle cx="30" cy="343.8" r="2.3"/>
<path d="M32,345.4 L37.6,347.2 L35.4,348.4 L37.2,350.6 L36.2,351.4 L34.4,349.2 L33.2,351.2 Z" fill="#4a4a4a" stroke-width="0.6"/>
</g>
<!-- discounts -->
<g transform="translate(30,372)">
<path d="M0,-7.6 L1.9,-6.1 L4.3,-6.4 L5,-4.1 L7.2,-3 L6.5,-0.7 L7.6,1.4 L5.8,3 L5.6,5.4 L3.2,5.8 L1.6,7.6 L-0.6,6.6 L-2.8,7.4 L-4.2,5.4 L-6.4,4.6 L-6.2,2.2 L-7.6,0.2 L-6.2,-1.8 L-6.4,-4.2 L-4.2,-5 L-2.8,-7 Z" fill="#b5b5b5" stroke="#b5b5b5" stroke-width="1" stroke-linejoin="round"/>
<path d="M-2.4,2.4L2.4,-2.4" stroke="#ebebeb" stroke-width="1.3" stroke-linecap="round"/><circle cx="-2" cy="-2" r="1.1" fill="#ebebeb"/><circle cx="2" cy="2" r="1.1" fill="#ebebeb"/>
</g>
<!-- online store -->
<g>
<rect x="22.1" y="432.1" width="15.8" height="15.8" rx="3.6" fill="#4a4a4a"/>
<g fill="none" stroke="#ebebeb" stroke-width="1.3" stroke-linejoin="round" stroke-linecap="round">
<path d="M25.4,438.2 L26.2,435.4 H33.8 L34.6,438.2 C34.6,439 34,439.6 33.2,439.6 C32.4,439.6 31.6,439 31.6,438.2 C31.6,439 30.8,439.6 30,439.6 C29.2,439.6 28.4,439 28.4,438.2 C28.4,439 27.6,439.6 26.8,439.6 C26,439.6 25.4,439 25.4,438.2 Z"/>
<path d="M26.3,440 V444.6 H33.7 V440"/><path d="M28.8,444.6 V442.4 H31.2 V444.6"/>
</g>
</g>
<!-- chevrons -->
<g fill="none" stroke="#616161" stroke-width="1.6" stroke-linecap="round" stroke-linejoin="round"><path d="M216.3,409.8L220.6,414.3L216.3,418.8"/><path d="M216.3,481.6L220.6,486.1L216.3,490.6"/></g>
<!-- settings gear -->
<g transform="translate(29.9,887)">
<g stroke="#4a4a4a" stroke-width="3.5" stroke-linecap="round" fill="none"><path d="M-0.00,-5.30L0.00,5.30"/><path d="M-4.59,-2.65L4.59,2.65"/><path d="M4.59,-2.65L-4.59,2.65"/></g>
<circle cx="0" cy="0" r="4.6" fill="#4a4a4a"/>
<circle cx="0" cy="0" r="1.5" fill="#ebebeb"/>
</g>
<!-- ===== header icons ===== -->
<g fill="none" stroke="#303030" stroke-width="1.5">
<rect x="263.9" y="88.2" width="2.7" height="5.4" rx="1.35"/><rect x="268.5" y="82.6" width="2.9" height="11" rx="1.45" fill="#8a8a8a"/><rect x="273.4" y="85.2" width="2.7" height="8.4" rx="1.35"/>
</g>
<!-- calendar -->
<g fill="none" stroke="#303030" stroke-width="1.5" stroke-linecap="round">
<rect x="266.1" y="122.2" width="11.6" height="11" rx="2.6"/><path d="M266.4,126.4H277.4"/><path d="M269,121.2V122.4M274.8,121.2V122.4"/>
</g>
<!-- confetti -->
<g fill="none" stroke="#4a4a4a" stroke-width="1.4" stroke-linecap="round" stroke-linejoin="round">
<path d="M1710.6,85.4 L1707.9,92.6 C1707.6,93.5 1708.4,94.3 1709.3,94 L1716.4,91.3 C1714.6,88.8 1713,87.2 1710.6,85.4 Z"/>
<path d="M1713.6,86.6C1714.4,85.4 1714.4,83.6 1713.4,82"/><path d="M1717,90.2C1718,89.4 1719.2,89.2 1720.4,89.4"/>
</g>
<g fill="#4a4a4a"><circle cx="1709.6" cy="82.2" r="0.9"/><path d="M1719.5,81.5l1,1.3l-1,1.3l-1,-1.3z"/><path d="M1720,91.8l0.9,1.2l-0.9,1.2l-0.9,-1.2z"/><circle cx="1717.6" cy="86.6" r="0.9"/></g>
<!-- refresh -->
<g fill="none" stroke="#8a8a8a" stroke-width="1.5" stroke-linecap="round" stroke-linejoin="round">
<path d="M1744,88 V86.6 C1744,85 1745.2,83.8 1746.8,83.8 H1756"/><path d="M1753.8,81.4L1756.2,83.8L1753.8,86.2"/>
<path d="M1756,88 V89.4 C1756,91 1754.8,92.2 1753.2,92.2 H1744"/><path d="M1746.2,89.8L1743.8,92.2L1746.2,94.6"/>
</g>
<!-- expand -->
<g fill="none" stroke="#4a4a4a" stroke-width="1.6" stroke-linecap="round" stroke-linejoin="round">
<path d="M1787.6,82H1791.8V86.2"/><path d="M1791.6,82.2L1787.4,86.4"/>
<path d="M1784.4,93.6H1780.2V89.4"/><path d="M1780.4,93.4L1784.6,89.2"/>
</g>
</svg>

<div style="position:absolute;left:0;top:0;width:1919px;height:913px;will-change:transform">
<span class="t" style="left:672.30px;top:20.12px;font-size:14px;color:#b5b5b5;letter-spacing:-0.332px;-webkit-text-stroke:0.2px #b5b5b5;">Search</span>
<span class="t" style="left:1216.00px;top:19.91px;font-size:10.5px;color:#b5b5b5;font-weight:700;letter-spacing:-1.000px;">CTRL</span>
<span class="t" style="left:1256.70px;top:19.91px;font-size:10.5px;color:#b5b5b5;font-weight:700;">K</span>
<span class="t" style="left:1720.50px;top:20.28px;font-size:11px;color:#ffffff;letter-spacing:1.019px;-webkit-text-stroke:0.2px #ffffff;">L-</span>
<span class="t" style="left:1743.80px;top:20.10px;font-size:12.5px;color:#e3e3e3;font-weight:700;letter-spacing:-0.283px;">Laihas Bohemian Dreami...</span>
<span class="t" style="left:48.40px;top:75.07px;font-size:13px;color:#303030;letter-spacing:0.504px;-webkit-text-stroke:0.5px #303030;">Home</span>
<span class="t" style="left:48.40px;top:103.07px;font-size:13px;color:#c4c4c4;letter-spacing:0.453px;-webkit-text-stroke:0.5px #c4c4c4;">Orders</span>
<span class="t" style="left:48.40px;top:131.07px;font-size:13px;color:#303030;letter-spacing:0.584px;-webkit-text-stroke:0.5px #303030;">Products</span>
<span class="t" style="left:48.40px;top:159.07px;font-size:13px;color:#c4c4c4;letter-spacing:0.643px;-webkit-text-stroke:0.5px #c4c4c4;">Customers</span>
<span class="t" style="left:48.40px;top:187.07px;font-size:13px;color:#303030;letter-spacing:0.576px;-webkit-text-stroke:0.5px #303030;">Content</span>
<span class="t" style="left:48.40px;top:215.07px;font-size:13px;color:#c4c4c4;letter-spacing:0.375px;-webkit-text-stroke:0.5px #c4c4c4;">Finance</span>
<span class="t" style="left:48.40px;top:243.07px;font-size:13px;color:#303030;letter-spacing:0.784px;-webkit-text-stroke:0.5px #303030;">Analytics</span>
<span class="t" style="left:48.40px;top:335.17px;font-size:13px;color:#303030;letter-spacing:0.728px;-webkit-text-stroke:0.5px #303030;">Marketing</span>
<span class="t" style="left:48.40px;top:362.97px;font-size:13px;color:#c4c4c4;letter-spacing:0.653px;-webkit-text-stroke:0.5px #c4c4c4;">Discounts</span>
<span class="t" style="left:48.40px;top:431.07px;font-size:13px;color:#303030;letter-spacing:0.403px;-webkit-text-stroke:0.5px #303030;">Online Store</span>
<span class="t" style="left:48.40px;top:877.97px;font-size:13px;color:#303030;letter-spacing:0.531px;-webkit-text-stroke:0.5px #303030;">Settings</span>
<span class="t" style="left:48.40px;top:271.17px;font-size:13px;color:#616161;letter-spacing:0.278px;-webkit-text-stroke:0.2px #616161;">Reports</span>
<span class="t" style="left:48.40px;top:298.97px;font-size:13px;color:#616161;letter-spacing:0.362px;-webkit-text-stroke:0.2px #616161;">Live View</span>
<span class="t" style="left:10.00px;top:401.93px;font-size:12px;color:#616161;letter-spacing:0.462px;-webkit-text-stroke:0.5px #616161;">Sales channels</span>
<span class="t" style="left:10.00px;top:473.93px;font-size:12px;color:#616161;letter-spacing:0.947px;-webkit-text-stroke:0.5px #616161;">Apps</span>
<span class="t" style="left:283.10px;top:77.79px;font-size:18px;color:#303030;letter-spacing:0.684px;-webkit-text-stroke:0.67px #303030;">Analytics</span>
<span class="t" style="left:284.30px;top:117.93px;font-size:12px;color:#303030;letter-spacing:0.450px;-webkit-text-stroke:0.5px #303030;">Last 30 days</span>
<span class="t" style="left:389.30px;top:117.93px;font-size:12px;color:#303030;letter-spacing:0.310px;-webkit-text-stroke:0.5px #303030;">Compare to: Mar 15–Apr 13, 2025</span>
<span class="t" style="left:1820.50px;top:78.13px;font-size:12px;color:#ffffff;font-weight:700;letter-spacing:0.102px;">Customize</span>
<span class="t" style="left:272.30px;top:176.07px;font-size:13px;color:#303030;line-height:15px;border-bottom:2px dotted #c6c6c6;letter-spacing:0.376px;-webkit-text-stroke:0.5px #303030;">Gross sales</span>
<span class="t" style="left:272.30px;top:199.87px;font-size:13px;color:#303030;letter-spacing:0.498px;-webkit-text-stroke:0.5px #303030;">A$9,319.95</span>
<span class="t" style="left:361.70px;top:199.51px;font-size:10.5px;color:#616161;letter-spacing:0.292px;-webkit-text-stroke:0.5px #616161;">16%</span>
<span class="t" style="left:685.00px;top:176.07px;font-size:13px;color:#303030;line-height:15px;border-bottom:2px dotted #c6c6c6;letter-spacing:0.584px;-webkit-text-stroke:0.5px #303030;">Returning customer rate</span>
<span class="t" style="left:685.00px;top:199.87px;font-size:13px;color:#303030;letter-spacing:1.041px;-webkit-text-stroke:0.5px #303030;">34.85%</span>
<span class="t" style="left:752.70px;top:199.51px;font-size:10.5px;color:#8a8a8a;letter-spacing:2.113px;-webkit-text-stroke:0.5px #8a8a8a;">8%</span>
<span class="t" style="left:1099.00px;top:176.07px;font-size:13px;color:#303030;line-height:15px;border-bottom:2px dotted #c6c6c6;letter-spacing:0.659px;-webkit-text-stroke:0.5px #303030;">Orders fulfilled</span>
<span class="t" style="left:1099.00px;top:199.87px;font-size:13px;color:#303030;letter-spacing:0.531px;-webkit-text-stroke:0.5px #303030;">79</span>
<span class="t" style="left:1132.70px;top:199.51px;font-size:10.5px;color:#0c8346;letter-spacing:1.492px;-webkit-text-stroke:0.5px #0c8346;">25%</span>
<span class="t" style="left:1512.10px;top:176.07px;font-size:13px;color:#303030;line-height:15px;border-bottom:2px dotted #c6c6c6;letter-spacing:0.573px;-webkit-text-stroke:0.5px #303030;">Orders</span>
<span class="t" style="left:1512.10px;top:199.87px;font-size:13px;color:#303030;letter-spacing:1.531px;-webkit-text-stroke:0.5px #303030;">68</span>
<span class="t" style="left:1546.40px;top:199.51px;font-size:10.5px;color:#616161;letter-spacing:1.413px;-webkit-text-stroke:0.5px #616161;">7%</span>
<span class="t" style="left:272.30px;top:265.87px;font-size:13px;color:#303030;line-height:15px;border-bottom:2px dotted #c6c6c6;letter-spacing:0.495px;-webkit-text-stroke:0.5px #303030;">Total sales over time</span>
<span class="t" style="left:272.40px;top:293.82px;font-size:21px;color:#303030;letter-spacing:-1.015px;-webkit-text-stroke:0.78px #303030;">A$7,195.97</span>
<span class="t" style="left:390.30px;top:294.81px;font-size:10.5px;color:#616161;letter-spacing:-0.308px;-webkit-text-stroke:0.5px #616161;">17%</span>
<span class="t" style="left:274.20px;top:326.46px;font-size:11.5px;color:#666666;letter-spacing:-0.614px;-webkit-text-stroke:0.2px #666666;">A$1K</span>
<span class="t" style="left:274.20px;top:397.26px;font-size:11.5px;color:#666666;letter-spacing:0.434px;-webkit-text-stroke:0.2px #666666;">A$500</span>
<span class="t" style="left:274.20px;top:469.26px;font-size:11.5px;color:#666666;letter-spacing:0.466px;-webkit-text-stroke:0.2px #666666;">A$0</span>
<span class="t" style="left:274.20px;top:540.26px;font-size:11.5px;color:#666666;letter-spacing:0.501px;-webkit-text-stroke:0.2px #666666;">-A$500</span>
<span class="t" style="left:323.50px;top:562.36px;font-size:11.5px;color:#666666;letter-spacing:-0.178px;-webkit-text-stroke:0.2px #666666;">Apr 14</span>
<span class="t" style="left:391.29px;top:562.36px;font-size:11.5px;color:#666666;letter-spacing:-0.178px;-webkit-text-stroke:0.2px #666666;">Apr 16</span>
<span class="t" style="left:459.08px;top:562.36px;font-size:11.5px;color:#666666;letter-spacing:-0.178px;-webkit-text-stroke:0.2px #666666;">Apr 18</span>
<span class="t" style="left:526.22px;top:562.36px;font-size:11.5px;color:#666666;letter-spacing:0.082px;-webkit-text-stroke:0.2px #666666;">Apr 20</span>
<span class="t" style="left:594.01px;top:562.36px;font-size:11.5px;color:#666666;letter-spacing:0.082px;-webkit-text-stroke:0.2px #666666;">Apr 22</span>
<span class="t" style="left:661.80px;top:562.36px;font-size:11.5px;color:#666666;letter-spacing:0.082px;-webkit-text-stroke:0.2px #666666;">Apr 24</span>
<span class="t" style="left:729.59px;top:562.36px;font-size:11.5px;color:#666666;letter-spacing:0.082px;-webkit-text-stroke:0.2px #666666;">Apr 26</span>
<span class="t" style="left:797.38px;top:562.36px;font-size:11.5px;color:#666666;letter-spacing:0.082px;-webkit-text-stroke:0.2px #666666;">Apr 28</span>
<span class="t" style="left:865.17px;top:562.36px;font-size:11.5px;color:#666666;letter-spacing:0.082px;-webkit-text-stroke:0.2px #666666;">Apr 30</span>
<span class="t" style="left:934.41px;top:562.36px;font-size:11.5px;color:#666666;letter-spacing:0.018px;-webkit-text-stroke:0.2px #666666;">May 2</span>
<span class="t" style="left:1002.20px;top:562.36px;font-size:11.5px;color:#666666;letter-spacing:0.018px;-webkit-text-stroke:0.2px #666666;">May 4</span>
<span class="t" style="left:1069.99px;top:562.36px;font-size:11.5px;color:#666666;letter-spacing:0.018px;-webkit-text-stroke:0.2px #666666;">May 6</span>
<span class="t" style="left:1137.78px;top:562.36px;font-size:11.5px;color:#666666;letter-spacing:0.018px;-webkit-text-stroke:0.2px #666666;">May 8</span>
<span class="t" style="left:1203.12px;top:562.36px;font-size:11.5px;color:#666666;letter-spacing:-0.284px;-webkit-text-stroke:0.2px #666666;">May 10</span>
<span class="t" style="left:1270.91px;top:562.36px;font-size:11.5px;color:#666666;letter-spacing:-0.284px;-webkit-text-stroke:0.2px #666666;">May 12</span>
<span class="t" style="left:680.10px;top:599.26px;font-size:11.5px;color:#666666;letter-spacing:-0.132px;-webkit-text-stroke:0.2px #666666;">Apr 14–May 13, 2025</span>
<span class="t" style="left:824.50px;top:599.26px;font-size:11.5px;color:#666666;letter-spacing:-0.180px;-webkit-text-stroke:0.2px #666666;">Mar 15–Apr 13, 2025</span>
<span class="t" style="left:1375.60px;top:265.87px;font-size:13px;color:#303030;line-height:15px;border-bottom:2px dotted #c6c6c6;letter-spacing:0.543px;-webkit-text-stroke:0.5px #303030;">Total sales breakdown</span>
<span class="t" style="left:1387.30px;top:301.97px;font-size:13px;color:#3b4fa0;letter-spacing:0.276px;-webkit-text-stroke:0.2px #3b4fa0;">Gross sales</span>
<span class="t" style="left:1748.70px;top:301.97px;font-size:13px;color:#303030;letter-spacing:0.298px;-webkit-text-stroke:0.2px #303030;">A$9,319.95</span>
<span class="t" style="left:1838.50px;top:301.61px;font-size:10.5px;color:#616161;letter-spacing:0.892px;-webkit-text-stroke:0.5px #616161;">16%</span>
<span class="t" style="left:1387.30px;top:343.52px;font-size:13px;color:#3b4fa0;letter-spacing:0.478px;-webkit-text-stroke:0.2px #3b4fa0;">Discounts</span>
<span class="t" style="left:1739.90px;top:343.52px;font-size:13px;color:#303030;letter-spacing:0.716px;-webkit-text-stroke:0.2px #303030;">-A$2,449.78</span>
<span class="t" style="left:1839.80px;top:343.16px;font-size:10.5px;color:#0c8346;letter-spacing:-0.275px;-webkit-text-stroke:0.5px #0c8346;">11%</span>
<span class="t" style="left:1387.30px;top:385.07px;font-size:13px;color:#3b4fa0;letter-spacing:0.295px;-webkit-text-stroke:0.2px #3b4fa0;">Returns</span>
<span class="t" style="left:1761.90px;top:385.07px;font-size:13px;color:#303030;letter-spacing:0.462px;-webkit-text-stroke:0.2px #303030;">-A$67.50</span>
<span class="t" style="left:1838.50px;top:384.71px;font-size:10.5px;color:#616161;letter-spacing:0.892px;-webkit-text-stroke:0.5px #616161;">21%</span>
<span class="t" style="left:1387.30px;top:426.62px;font-size:13px;color:#3b4fa0;letter-spacing:0.350px;-webkit-text-stroke:0.2px #3b4fa0;">Net sales</span>
<span class="t" style="left:1745.90px;top:426.62px;font-size:13px;color:#303030;letter-spacing:0.609px;-webkit-text-stroke:0.2px #303030;">A$6,802.67</span>
<span class="t" style="left:1838.50px;top:426.26px;font-size:10.5px;color:#616161;letter-spacing:0.892px;-webkit-text-stroke:0.5px #616161;">18%</span>
<span class="t" style="left:1387.30px;top:468.17px;font-size:13px;color:#3b4fa0;letter-spacing:0.455px;-webkit-text-stroke:0.2px #3b4fa0;">Shipping charges</span>
<span class="t" style="left:1759.60px;top:468.17px;font-size:13px;color:#303030;letter-spacing:0.375px;-webkit-text-stroke:0.2px #303030;">A$377.03</span>
<span class="t" style="left:1842.00px;top:467.81px;font-size:10.5px;color:#0c8346;letter-spacing:2.312px;-webkit-text-stroke:0.5px #0c8346;">6%</span>
<span class="t" style="left:1387.30px;top:509.72px;font-size:13px;color:#3b4fa0;letter-spacing:0.330px;-webkit-text-stroke:0.2px #3b4fa0;">Return fees</span>
<span class="t" style="left:1772.90px;top:509.72px;font-size:13px;color:#303030;letter-spacing:0.759px;-webkit-text-stroke:0.2px #303030;">A$0.00</span>
<span class="t" style="left:1387.30px;top:551.27px;font-size:13px;color:#3b4fa0;letter-spacing:0.508px;-webkit-text-stroke:0.2px #3b4fa0;">Taxes</span>
<span class="t" style="left:1765.30px;top:551.27px;font-size:13px;color:#303030;letter-spacing:0.177px;-webkit-text-stroke:0.2px #303030;">A$16.27</span>
<span class="t" style="left:1832.80px;top:550.91px;font-size:10.5px;color:#8a8a8a;letter-spacing:1.547px;-webkit-text-stroke:0.5px #8a8a8a;">330%</span>
<span class="t" style="left:1387.30px;top:592.82px;font-size:13px;color:#3b4fa0;letter-spacing:0.388px;-webkit-text-stroke:0.2px #3b4fa0;">Total sales</span>
<span class="t" style="left:1752.20px;top:592.82px;font-size:13px;color:#303030;letter-spacing:-0.091px;-webkit-text-stroke:0.2px #303030;">A$7,195.97</span>
<span class="t" style="left:1838.50px;top:592.46px;font-size:10.5px;color:#616161;letter-spacing:0.892px;-webkit-text-stroke:0.5px #616161;">17%</span>
<span class="t" style="left:272.50px;top:670.77px;font-size:13px;color:#303030;line-height:15px;border-bottom:2px dotted #c6c6c6;letter-spacing:0.482px;-webkit-text-stroke:0.5px #303030;">Total sales by sales channel</span>
<span class="t" style="left:382.20px;top:776.22px;font-size:21px;color:#303030;letter-spacing:-0.618px;-webkit-text-stroke:0.78px #303030;">A$7.2K</span>
<span class="t" style="left:408.00px;top:796.81px;font-size:10.5px;color:#616161;letter-spacing:-0.258px;-webkit-text-stroke:0.5px #616161;">17%</span>
<span class="t" style="left:547.80px;top:769.83px;font-size:12px;color:#616161;letter-spacing:0.300px;-webkit-text-stroke:0.2px #616161;">Online Store</span>
<span class="t" style="left:547.80px;top:797.93px;font-size:12px;color:#616161;letter-spacing:0.373px;-webkit-text-stroke:0.2px #616161;">ExchangeIt</span>
<span class="t" style="left:653.10px;top:770.13px;font-size:12px;color:#616161;letter-spacing:0.245px;-webkit-text-stroke:0.2px #616161;">A$7.2K</span>
<span class="t" style="left:704.50px;top:770.60px;font-size:9px;color:#616161;letter-spacing:-0.158px;-webkit-text-stroke:0.5px #616161;">17%</span>
<span class="t" style="left:668.90px;top:797.93px;font-size:12px;color:#616161;letter-spacing:0.770px;-webkit-text-stroke:0.2px #616161;">A$0</span>
<span class="t" style="left:823.10px;top:670.77px;font-size:13px;color:#303030;line-height:15px;border-bottom:2px dotted #c6c6c6;letter-spacing:0.503px;-webkit-text-stroke:0.5px #303030;">Average order value over time</span>
<span class="t" style="left:823.10px;top:698.82px;font-size:21px;color:#303030;letter-spacing:-0.675px;-webkit-text-stroke:0.78px #303030;">A$101.03</span>
<span class="t" style="left:927.00px;top:699.11px;font-size:10.5px;color:#616161;letter-spacing:-0.325px;-webkit-text-stroke:0.5px #616161;">11%</span>
<span class="t" style="left:825.00px;top:731.26px;font-size:11.5px;color:#666666;letter-spacing:0.509px;-webkit-text-stroke:0.2px #666666;">A$500</span>
<span class="t" style="left:825.00px;top:810.46px;font-size:11.5px;color:#666666;letter-spacing:0.466px;-webkit-text-stroke:0.2px #666666;">A$0</span>
<span class="t" style="left:868.90px;top:832.26px;font-size:11.5px;color:#666666;letter-spacing:-0.258px;-webkit-text-stroke:0.2px #666666;">Apr 14</span>
<span class="t" style="left:944.25px;top:832.26px;font-size:11.5px;color:#666666;letter-spacing:-0.258px;-webkit-text-stroke:0.2px #666666;">Apr 19</span>
<span class="t" style="left:1019.60px;top:832.26px;font-size:11.5px;color:#666666;letter-spacing:-0.258px;-webkit-text-stroke:0.2px #666666;">Apr 24</span>
<span class="t" style="left:1094.95px;top:832.26px;font-size:11.5px;color:#666666;letter-spacing:-0.258px;-webkit-text-stroke:0.2px #666666;">Apr 29</span>
<span class="t" style="left:1170.90px;top:832.26px;font-size:11.5px;color:#666666;letter-spacing:0.018px;-webkit-text-stroke:0.2px #666666;">May 4</span>
<span class="t" style="left:1246.25px;top:832.26px;font-size:11.5px;color:#666666;letter-spacing:0.018px;-webkit-text-stroke:0.2px #666666;">May 9</span>
<span class="t" style="left:955.20px;top:868.96px;font-size:11.5px;color:#666666;letter-spacing:-0.148px;-webkit-text-stroke:0.2px #666666;">Apr 14–May 13, 2025</span>
<span class="t" style="left:1099.30px;top:868.96px;font-size:11.5px;color:#666666;letter-spacing:-0.164px;-webkit-text-stroke:0.2px #666666;">Mar 15–Apr 13, 2025</span>
<span class="t" style="left:1375.60px;top:670.77px;font-size:13px;color:#303030;line-height:15px;border-bottom:2px dotted #c6c6c6;letter-spacing:0.560px;-webkit-text-stroke:0.5px #303030;">Total sales by product</span>
<span class="t" style="left:1375.60px;top:696.96px;font-size:11.5px;color:#616161;-webkit-text-stroke:0.2px #616161;">Laihas Iridescent Gold Oval Labradorite Ring · Laihas Bohemian Dreaming · Gemstone Gold Ring</span>
<span class="t" style="left:1757.20px;top:724.16px;font-size:11.5px;color:#616161;letter-spacing:0.050px;-webkit-text-stroke:0.2px #616161;">A$188.48</span>
<span class="t" style="left:1386.20px;top:758.96px;font-size:11.5px;color:#616161;letter-spacing:0.309px;-webkit-text-stroke:0.2px #616161;">A$0.00</span>
<span class="t" style="left:1375.60px;top:802.16px;font-size:11.5px;color:#616161;letter-spacing:-0.007px;-webkit-text-stroke:0.2px #616161;">Laihas Oval Moonstone Ring · Laihas Bohemian Dreaming · Gemstone Sterling Silver Ring</span>
<span class="t" style="left:1695.90px;top:829.06px;font-size:11.5px;color:#616161;letter-spacing:-0.564px;-webkit-text-stroke:0.2px #616161;">A$157.41</span>
<span class="t" style="left:1763.50px;top:829.21px;font-size:10.5px;color:#0c8346;letter-spacing:1.142px;-webkit-text-stroke:0.5px #0c8346;">75%</span>
<span class="t" style="left:1562.70px;top:864.06px;font-size:11.5px;color:#616161;letter-spacing:0.290px;-webkit-text-stroke:0.2px #616161;">A$89.95</span>
<span class="t" style="left:44.90px;top:20.21px;font-size:19.5px;color:#ffffff;font-weight:700;letter-spacing:-1.524px;-webkit-text-stroke:0.45px #ffffff;font-style:italic;">shopify</span>
</div>
</body></html>
